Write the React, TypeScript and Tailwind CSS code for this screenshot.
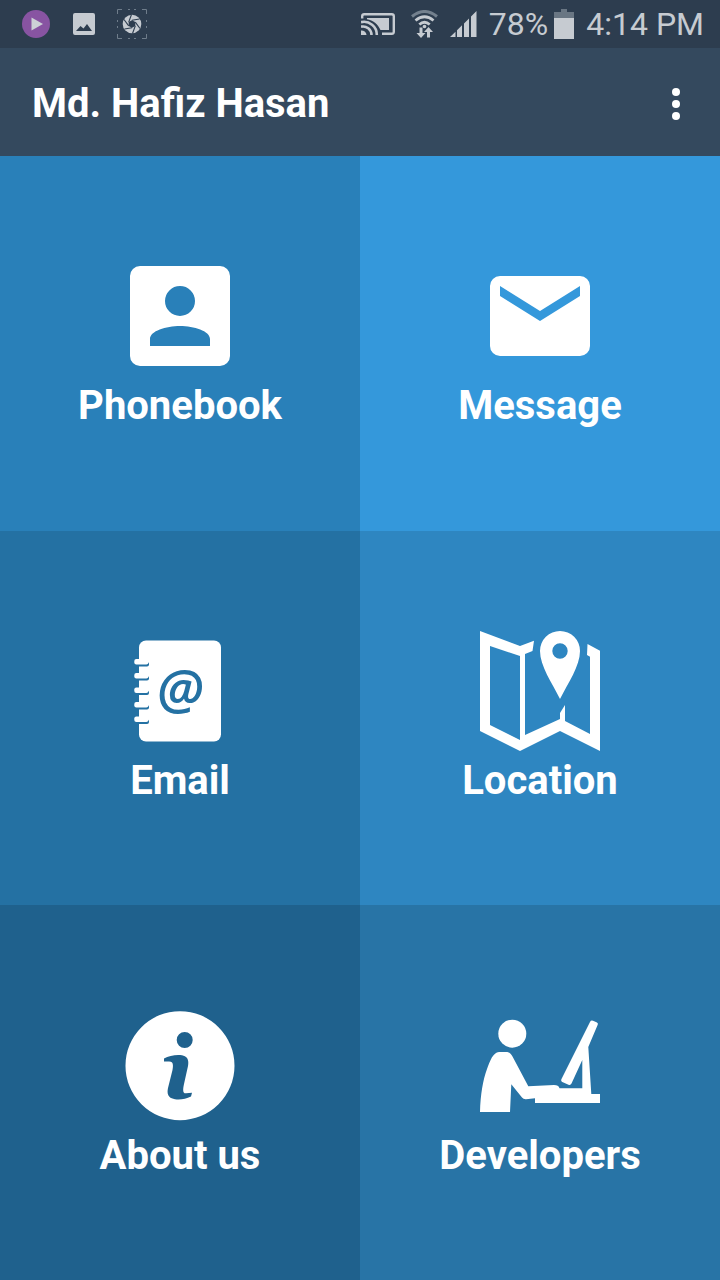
import type { ReactNode } from "react";

function PlayIcon() {
  return (
    <svg viewBox="0 0 28 28" className="size-7">
      <circle cx="14" cy="14" r="14" fill="#8854a2" />
      <path d="M9.5 7.5v13L21 14z" fill="#cdd1d6" />
    </svg>
  );
}

function ImageIcon() {
  return (
    <svg viewBox="0 0 22 22" className="size-[22px]">
      <path
        fillRule="evenodd"
        fill="currentColor"
        d="M2 0h18a2 2 0 0 1 2 2v18a2 2 0 0 1-2 2H2a2 2 0 0 1-2-2V2a2 2 0 0 1 2-2zM3 18h16l-5-7-3.5 4.5L7.500 13z"
      />
    </svg>
  );
}

function ShutterIcon() {
  return (
    <svg viewBox="0 0 30 30" className="size-[30px]">
      <path
        fill="none"
        stroke="#6f7d8b"
        d="M.5 5V.5H5M11 .5h2M17 .5h2M25 .5h4.500V5M29.500 11v2M29.500 17v2M29.500 25v4.500H25M19 29.500h-2M13 29.500h-2M5 29.500H.5V25M.5 19v-2M.5 13v-2"
      />
      <circle cx="15" cy="15" r="9.300" fill="currentColor" />
      <path d="M15 11.200l3.300 1.900v3.800L15 18.800l-3.300-1.900v-3.800z" fill="#2d3d4f" />
      <path
        stroke="#2d3d4f"
        strokeWidth="1.100"
        fill="none"
        d="M15 11.200L22.500 10M18.300 13.100L23 19.500M18.300 16.900L15.500 24.500M15 18.800L7.500 20M11.700 16.900L7 10.500M11.700 13.100L14.500 5.500"
      />
    </svg>
  );
}

function CastIcon() {
  return (
    <svg viewBox="0 0 34 22" className="h-[22px] w-[34px]" fill="none">
      <path
        d="M1.200 5.500V3a2 2 0 0 1 2-1.800h27.600a2 2 0 0 1 2 1.800v16a2 2 0 0 1-2 1.800H21"
        stroke="currentColor"
        strokeWidth="2.400"
      />
      <path d="M6 5h22v12h-8.500C17 11 12 7 6 6.200z" fill="currentColor" />
      <path
        d="M0 9.200A12.800 12.800 0 0 1 15.800 22M0 13.700A8.500 8.500 0 0 1 10.500 22"
        stroke="currentColor"
        strokeWidth="2.600"
      />
      <path d="M0 17.500A5 5 0 0 1 5.500 22H0z" fill="currentColor" />
    </svg>
  );
}

function WifiIcon() {
  return (
    <svg viewBox="0 0 27 28" className="h-7 w-[27px]" fill="none">
      <path d="M1 6.500Q13.500-3.500 26 6.500" stroke="#74818e" strokeWidth="3" />
      <path
        d="M4.500 10.500Q13.500 3 22.500 10.500M8.300 14.500Q13.500 10 18.700 14.500"
        stroke="currentColor"
        strokeWidth="2.800"
      />
      <circle cx="13.500" cy="16.500" r="1.800" fill="currentColor" />
      <path
        d="M8.500 17.500h3v5.500h3L10 28 5.500 23h3zM16 27.500V22h-3l4.500-5 4.500 5h-3v5.500z"
        fill="currentColor"
      />
    </svg>
  );
}

function SignalIcon() {
  return (
    <svg viewBox="0 0 27 26" className="h-[26px] w-[27px]" fill="currentColor">
      <path d="M0 26l5.500-5.300v5.300zM7 26v-6.800l5-4.900V26zM14 26V12.400l5-4.900V26zM21 26V5.600L26.500 0v26z" />
    </svg>
  );
}

function BatteryIcon() {
  return (
    <svg viewBox="0 0 20 30" className="h-[30px] w-5">
      <path d="M7 0h6v3h7v6H0V3h7z" fill="#697683" />
      <path d="M0 9h20v21H0z" fill="currentColor" />
    </svg>
  );
}

function PhonebookIcon() {
  return (
    <svg viewBox="0 0 120 120" className="size-30" fill="currentColor">
      <path
        fillRule="evenodd"
        d="M20 10h80a10 10 0 0 1 10 10v80a10 10 0 0 1-10 10H20a10 10 0 0 1-10-10V20a10 10 0 0 1 10-10zM60 30a15 15 0 1 0 0 30a15 15 0 1 0 0-30zM30 90h60v-7c0-8-16-13-30-13s-30 5-30 13z"
      />
    </svg>
  );
}

function MessageIcon() {
  return (
    <svg viewBox="0 0 120 120" className="size-30" fill="currentColor">
      <path
        fillRule="evenodd"
        d="M20 20h80a10 10 0 0 1 10 10v60a10 10 0 0 1-10 10H20a10 10 0 0 1-10-10V30a10 10 0 0 1 10-10zM20 30v10l40 25 40-25V30L60 55z"
      />
    </svg>
  );
}

function EmailIcon() {
  const rings = [31, 45, 59.500, 74, 88.500];

  return (
    <svg viewBox="0 0 120 120" className="size-30" fill="currentColor">
      <rect x="19" y="9.500" width="82" height="101" rx="7" />
      {rings.map((y) => (
        <g key={y}>
          <rect x="16" y={y} width="13" height="4.500" rx="2" fill="#2471a3" />
          <rect x="14.300" y={y - 3} width="14" height="5.500" rx="2" />
        </g>
      ))}
      <text
        x="60"
        y="78"
        textAnchor="middle"
        className="font-['Open_Sans',sans-serif] text-[54px] font-semibold italic"
        fill="#2471a3"
      >
        @
      </text>
    </svg>
  );
}

function LocationIcon() {
  return (
    <svg viewBox="0 0 120 120" className="size-30" fill="currentColor">
      <path
        fillRule="evenodd"
        d="M0 0L40 15L54 9.700L52.500 20L45 23V104L80 88V82L85 74V90L110 103V25.700L107 24L107.500 13L120 19.700V120L80 100L40 120L0 100zM10 15V94L40 109V25z"
      />
      <path
        fillRule="evenodd"
        d="M80 0A20 20 0 0 1 100 20C100 35 88 52 80 68C72 52 60 35 60 20A20 20 0 0 1 80 0zM80 12.300a7.700 7.700 0 1 0 0 15.400a7.700 7.700 0 1 0 0-15.400z"
      />
    </svg>
  );
}

function AboutIcon() {
  return (
    <svg viewBox="0 0 120 120" className="size-30" fill="currentColor">
      <path
        fillRule="evenodd"
        d="M60 5.200a54.500 54.500 0 1 0 0 109a54.500 54.500 0 1 0 0-109zM64.700 26a8 8 0 1 0 0 16a8 8 0 1 0 0-16zM44 55.500V52.500C49 49.500 57 48.300 62 49.300C67.500 50.500 69 54 68 60L64 78C62.500 85 63 87.500 66 87.300L72 86.700L71 90.500C66 93 60 94 55 93.200C49 92.500 46.500 89 48 82L52.500 64C53.500 58 53 55.500 49 55.500z"
      />
    </svg>
  );
}

function DevelopersIcon() {
  return (
    <svg viewBox="0 0 120 120" className="size-30" fill="currentColor">
      <circle cx="32.300" cy="27.700" r="14" />
      <path d="M0 106C.5 88 3 74 7 63C10 55 13 46.300 19 46H26C29 46 31 47.500 32.500 50.500L48.300 80.300L74 79C77 79 79 80 79.500 82.300H102.300V54L91.500 77.500Q90.500 79.500 88.500 78.700L82.300 76Q80.500 75 81.500 73L110 16Q111 14 113 14.800L116.500 16.200Q118.500 17 117.600 19L108.300 41L111.300 88H120V97H55V92.300L46 93.300Q43.500 93.500 42 91.500L31.300 78.300L30 106z" />
    </svg>
  );
}

type Tile = {
  label: string;
  color: string;
  icon: ReactNode;
};

const tiles: Tile[] = [
  { label: "Phonebook", color: "bg-[#2980b9]", icon: <PhonebookIcon /> },
  { label: "Message", color: "bg-[#3498db]", icon: <MessageIcon /> },
  { label: "Email", color: "bg-[#2471a3]", icon: <EmailIcon /> },
  { label: "Location", color: "bg-[#2e86c1]", icon: <LocationIcon /> },
  { label: "About us", color: "bg-[#1f618d]", icon: <AboutIcon /> },
  { label: "Developers", color: "bg-[#2874a6]", icon: <DevelopersIcon /> },
];

function StatusBar() {
  return (
    <div className="flex h-12 items-center justify-between bg-[#2d3d4f] pr-4 pl-3 text-[#c6cbd1]">
      <div className="flex items-center">
        <span className="flex w-12 justify-center">
          <PlayIcon />
        </span>
        <span className="flex w-12 justify-center">
          <ImageIcon />
        </span>
        <span className="flex w-12 justify-center">
          <ShutterIcon />
        </span>
      </div>

      <div className="flex items-center text-[32px] leading-12">
        <span className="flex items-center gap-4">
          <CastIcon />
          <span className="flex items-center gap-3">
            <WifiIcon />
            <SignalIcon />
            <span>78%</span>
          </span>
        </span>
        <span className="flex items-center gap-3 pl-1.5">
          <BatteryIcon />
          <span>4:14 PM</span>
        </span>
      </div>
    </div>
  );
}

export default function App() {
  return (
    <div className="flex min-h-screen flex-col font-[Roboto,sans-serif] text-white">
      <StatusBar />

      {/* APP BAR */}
      <header className="flex h-27 items-center justify-between bg-[#34495e] pt-1 pr-5 pl-8">
        <h1 className="text-[40px] leading-14 font-bold">Md. Hafiz Hasan</h1>
        <button
          type="button"
          aria-label="More options"
          className="flex size-12 items-center justify-center"
        >
          <svg viewBox="0 0 8 32" className="h-8 w-2" fill="currentColor">
            <circle cx="4" cy="4" r="4" />
            <circle cx="4" cy="16" r="4" />
            <circle cx="4" cy="28" r="4" />
          </svg>
        </button>
      </header>

      {/* TILES */}
      <main className="grid flex-1 grid-cols-2 grid-rows-3">
        {tiles.map((tile) => (
          <button
            key={tile.label}
            type="button"
            className={`flex flex-col items-center justify-center gap-0.5 pt-1 ${tile.color}`}
          >
            {tile.icon}
            <span className="text-[40px] leading-14 font-bold">
              {tile.label}
            </span>
          </button>
        ))}
      </main>
    </div>
  );
}
